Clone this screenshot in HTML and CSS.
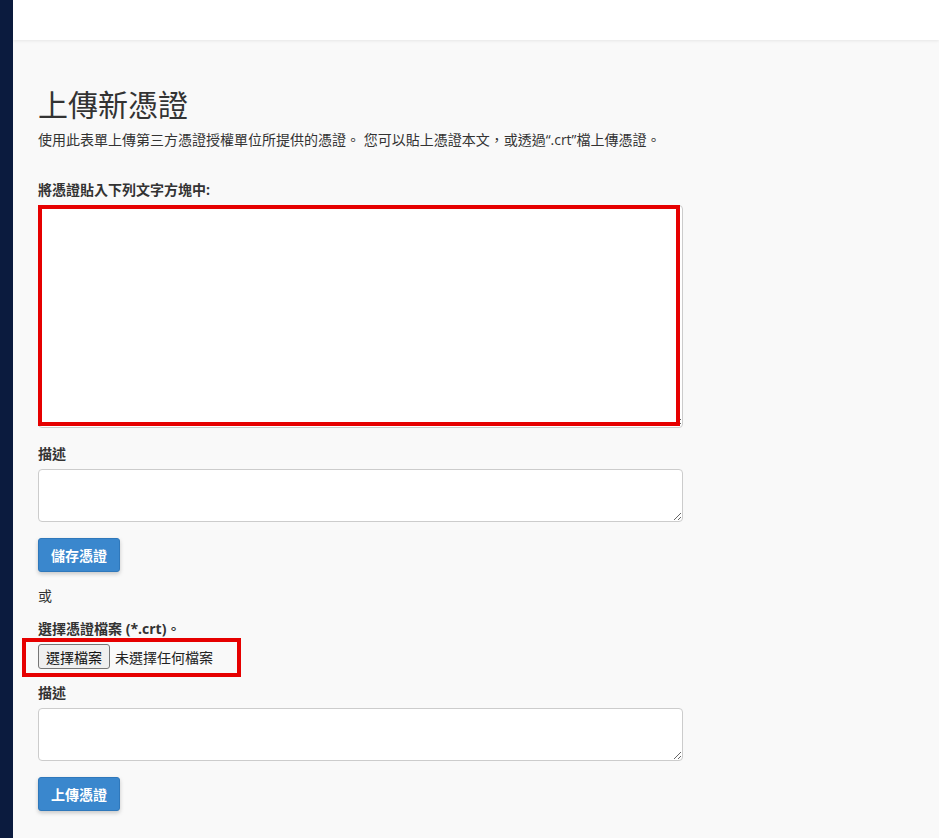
FILE: index.html
```html
<!DOCTYPE html>
<html>
<head>
	<meta charset="utf-8">
	<title>上傳新憑證</title>
	<link rel="stylesheet" href="styles.css">
</head>
<body>
	<div class="layout">
		<div class="sidebar"></div>
		<div class="page">
			<div class="topbar"></div>
			<div class="content">
				<h1 class="title">上傳新憑證</h1>
				<p class="intro">使用此表單上傳第三方憑證授權單位所提供的憑證。 您可以貼上憑證本文，或透過“.crt”檔上傳憑證。</p>

				<form class="form">
					<label class="field-label" for="crt">將憑證貼入下列文字方塊中:</label>
					<div class="mark mark-textarea">
						<textarea id="crt" class="input input-large"></textarea>
					</div>

					<label class="field-label" for="desc1">描述</label>
					<textarea id="desc1" class="input input-small"></textarea>

					<div class="actions">
						<button type="button" class="btn-primary">儲存憑證</button>
					</div>
				</form>

				<p class="or">或</p>

				<form class="form">
					<label class="field-label">選擇憑證檔案 (*.crt)。</label>
					<div class="mark mark-file">
						<span class="file-picker">
							<button type="button" class="file-btn">選擇檔案</button>
							<span class="file-name">未選擇任何檔案</span>
						</span>
					</div>

					<label class="field-label" for="desc2">描述</label>
					<textarea id="desc2" class="input input-small"></textarea>

					<div class="actions">
						<button type="button" class="btn-primary">上傳憑證</button>
					</div>
				</form>
			</div>
		</div>
	</div>
</body>
</html>
```

FILE: styles.css
```css
html, body {
	margin: 0;
	height: 100%;
}

body {
	font-family: "Open Sans", "Noto Sans CJK TC", sans-serif;
	font-size: 14px;
	color: #333;
	background: #f9f9f9;
}

.layout {
	display: flex;
	min-height: 100%;
}

.sidebar {
	width: 13px;
	flex: none;
	background: #0b1b3e;
}

.page {
	flex: 1;
	display: flex;
	flex-direction: column;
}

.topbar {
	height: 40px;
	background: #fff;
	box-shadow: 0 1px 3px rgba(0, 0, 0, 0.08);
}

.content {
	padding: 48px 25px 30px;
}

.title {
	margin: 0 0 9px;
	font-size: 30px;
	font-weight: 400;
	line-height: 33px;
	color: #333;
}

.intro {
	margin: 0 0 30px;
	line-height: 20px;
}

.form {
	display: flex;
	flex-direction: column;
	align-items: flex-start;
}

.field-label {
	display: block;
	font-weight: bold;
	line-height: 20px;
	margin-bottom: 5px;
}

.input {
	display: block;
	box-sizing: border-box;
	width: 645px;
	border: 1px solid #ccc;
	border-radius: 4px;
	background: #fff;
	font-family: inherit;
	font-size: 14px;
	margin: 0 0 16px;
}

.input-large {
	height: 223px;
}

.input-small {
	height: 53px;
}

.actions {
	margin-bottom: 14px;
}

.btn-primary {
	height: 34px;
	padding: 0 12px;
	border: 1px solid #2f78bb;
	border-radius: 3px;
	background: #3a87cd;
	color: #fff;
	font-family: inherit;
	font-size: 14px;
	font-weight: 600;
	box-shadow: 0 2px 4px rgba(0, 0, 0, 0.2);
	cursor: pointer;
}

.or {
	margin: 0 0 13px;
	line-height: 20px;
}

.mark {
	position: relative;
}

.mark::after {
	content: "";
	position: absolute;
	border: 4px solid #e60000;
	pointer-events: none;
}

.mark-textarea::after {
	top: 0;
	left: 0;
	right: 3px;
	bottom: 18px;
}

.mark-file {
	margin-bottom: 14px;
}

.mark-file::after {
	top: -6px;
	left: -16px;
	right: -28px;
	bottom: -8px;
}

.file-picker {
	display: flex;
	align-items: center;
	height: 25px;
}

.file-btn {
	height: 25px;
	padding: 0 7px;
	border: 1px solid #767676;
	border-radius: 3px;
	background: #efefef;
	color: #111;
	font-family: inherit;
	font-size: 14px;
}

.file-name {
	margin-left: 5px;
	color: #222;
}
```
